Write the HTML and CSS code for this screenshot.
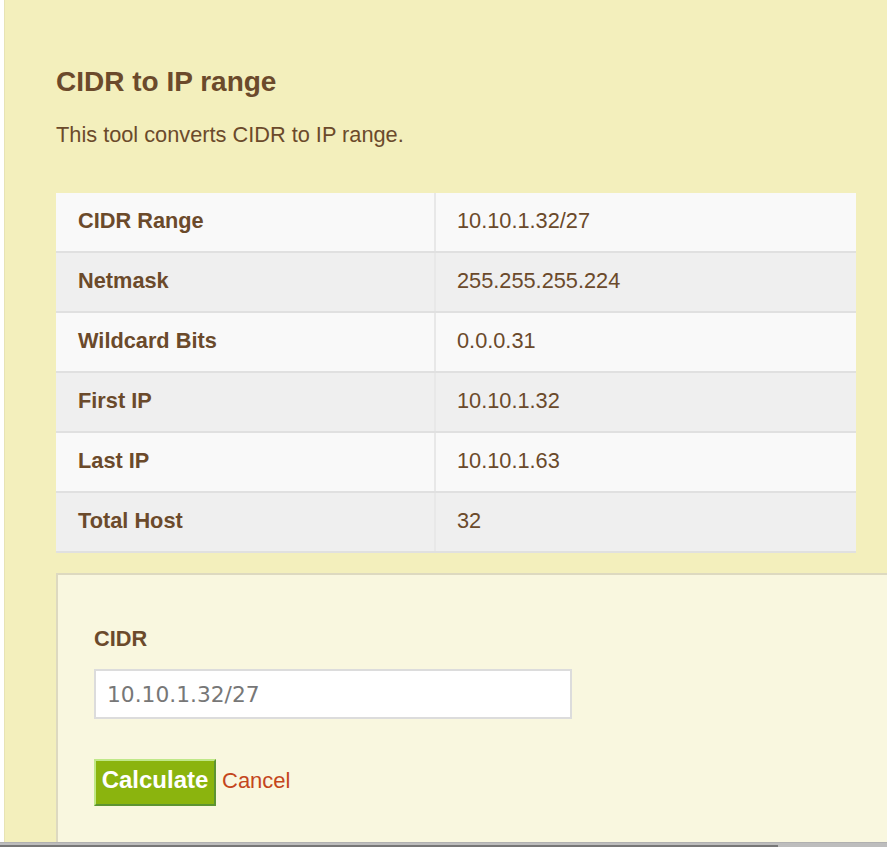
FILE: index.html
```html
<!DOCTYPE html>
<html>
<head>
    <title>CIDR to IP range</title>
    <link rel="stylesheet" href="styles.css">
</head>
<body>
    <div class="page">
        <h1 class="tool-title">CIDR to IP range</h1>
        <p class="tool-intro">This tool converts CIDR to IP range.</p>

        <table class="result-table">
            <tr><th>CIDR Range</th><td>10.10.1.32/27</td></tr>
            <tr><th>Netmask</th><td>255.255.255.224</td></tr>
            <tr><th>Wildcard Bits</th><td>0.0.0.31</td></tr>
            <tr><th>First IP</th><td>10.10.1.32</td></tr>
            <tr><th>Last IP</th><td>10.10.1.63</td></tr>
            <tr><th>Total Host</th><td>32</td></tr>
        </table>

        <form class="cidr-form" onsubmit="return false;">
            <label class="field-label" for="cidr">CIDR</label>
            <input type="text" id="cidr" class="field-input" value="10.10.1.32/27">
            <div class="form-actions">
                <button type="submit" class="calc-button">Calculate</button>
                <a href="#" class="cancel-link">Cancel</a>
            </div>
        </form>
    </div>

    <div class="hscroll"><div class="hscroll-thumb"></div></div>
</body>
</html>
```

FILE: styles.css
```css
html, body {
    margin: 0;
    padding: 0;
    height: 100%;
    overflow: hidden;
}

body {
    background: #ffffff;
    font-family: 'Liberation Sans', Arial, sans-serif;
    color: #6b4a2b;
}

.page {
    margin-left: 4px;
    min-height: 100%;
    border-left: 1px solid #e7e3b4;
    background: #f3efbc;
    padding: 65px 0 0 51px;
    box-sizing: border-box;
}

.tool-title {
    font-size: 28px;
    font-weight: bold;
    line-height: 33px;
    margin: 0;
}

.tool-intro {
    font-size: 21.75px;
    line-height: 33px;
    margin: 20px 0 0;
}

.result-table {
    margin-top: 42px;
    width: 800px;
    border-collapse: collapse;
    font-size: 21.75px;
    line-height: 33px;
}

.result-table th,
.result-table td {
    text-align: left;
    padding: 11px 22px 14px;
    border-bottom: 2px solid #e0e0e0;
}

.result-table th {
    width: 334px;
    font-weight: bold;
    border-right: 2px solid #e8e8e8;
}

.result-table td {
    padding-left: 21px;
}

.result-table tr:nth-child(odd) {
    background: #f9f9f9;
}

.result-table tr:nth-child(even) {
    background: #efefef;
}

/* box runs on past the right edge, so no right border */
.cidr-form {
    margin-top: 20px;
    min-height: 300px;
    background: #f9f7df;
    border: 2px solid #ddd9c0;
    border-right: none;
    padding: 47px 36px 0;
    box-sizing: border-box;
}

.field-label {
    display: block;
    font-size: 21.75px;
    font-weight: bold;
    line-height: 33px;
    margin-bottom: 14px;
}

.field-input {
    display: block;
    width: 478px;
    height: 50px;
    box-sizing: border-box;
    border: 2px solid #dcdcdc;
    background: #ffffff;
    padding: 0 11px;
    font-family: 'DejaVu Sans', sans-serif;
    font-size: 21.75px;
    color: #777777;
    outline: none;
}

.form-actions {
    display: flex;
    align-items: baseline;
    gap: 6px;
    margin-top: 40px;
}

.calc-button {
    height: 47px;
    width: 122px;
    box-sizing: border-box;
    padding: 0 0 5px;
    line-height: 38px;
    font-family: 'Liberation Sans', Arial, sans-serif;
    font-size: 24px;
    font-weight: bold;
    color: #ffffff;
    background: #8bb40e;
    border: 2px solid;
    border-color: #c0e888 #5d9432 #5d9432 #c0e888;
    cursor: pointer;
}

.cancel-link {
    font-size: 22px;
    color: #c4461c;
    text-decoration: none;
}

.hscroll {
    position: fixed;
    left: 0;
    right: 0;
    bottom: 0;
    height: 4px;
    background: #bdbdbd;
    border-top: 1px solid #b0b0b0;
}

.hscroll-thumb {
    margin-top: 2px;
    width: 778px;
    height: 2px;
    background: #777777;
}
```
